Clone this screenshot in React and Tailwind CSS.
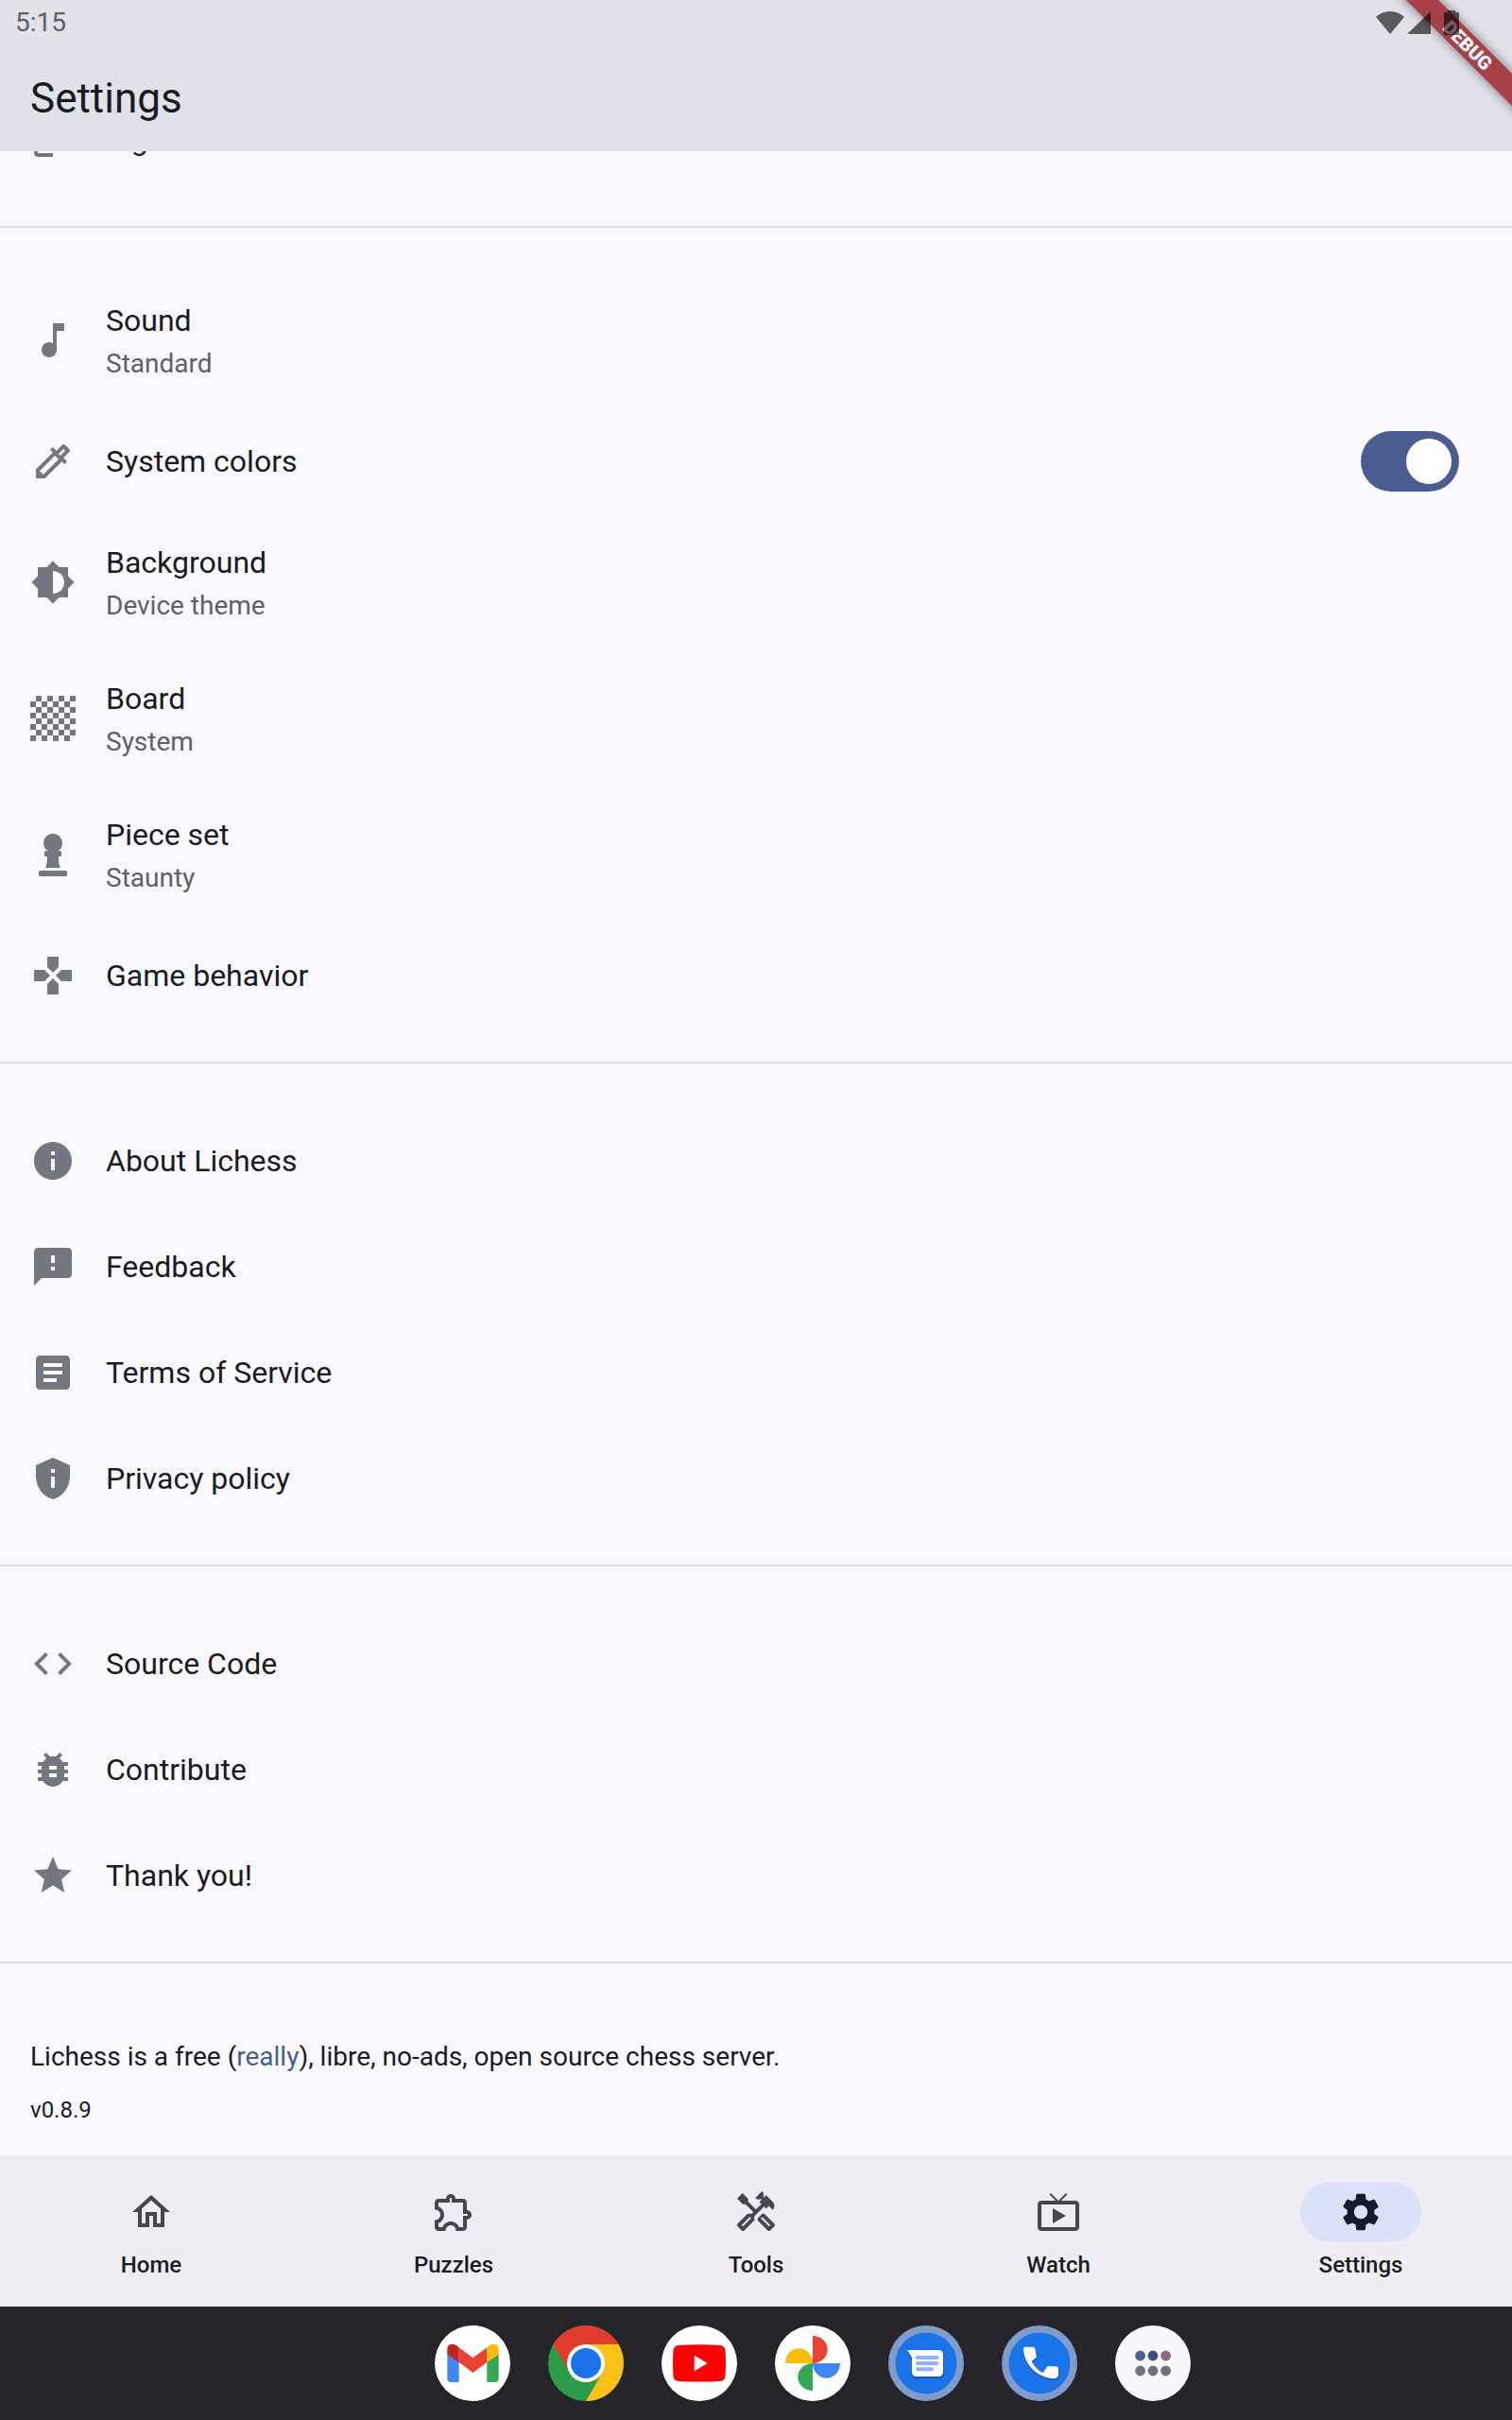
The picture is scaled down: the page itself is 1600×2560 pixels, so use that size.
import {
  MdArticle,
  MdBrightness6,
  MdBugReport,
  MdCode,
  MdFeedback,
  MdGamepad,
  MdInfo,
  MdLogout,
  MdMusicNote,
  MdOutlineColorize,
  MdOutlineExtension,
  MdOutlineHandyman,
  MdOutlineHome,
  MdOutlineLiveTv,
  MdPrivacyTip,
  MdSettings,
  MdStar,
} from "react-icons/md";

function BoardIcon({ className }) {
  const cells = [];
  for (let row = 0; row < 8; row++) {
    for (let col = 0; col < 8; col++) {
      if ((row + col) % 2 === 1) cells.push([col, row]);
    }
  }
  return (
    <svg viewBox="0 0 8 8" className={className} fill="currentColor" shapeRendering="crispEdges" aria-hidden="true">
      {cells.map(([x, y]) => (
        <rect key={`${x}-${y}`} x={x} y={y} width="1" height="1" />
      ))}
    </svg>
  );
}

function PawnIcon({ className }) {
  return (
    <svg viewBox="0 0 48 48" className={className} fill="currentColor" aria-hidden="true">
      <circle cx="24" cy="11.8" r="10" />
      <rect x="15" y="20" width="18" height="6" rx="1.5" />
      <path d="M18 25h12c0 5 .3 9 1.8 13H16.2C17.7 34 18 30 18 25z" />
      <rect x="9" y="41" width="30" height="6" rx="1.5" />
    </svg>
  );
}

function Row({ icon: Icon, title, subtitle }) {
  return (
    <li>
      <button
        type="button"
        className={`flex w-full items-center gap-8 px-8 text-left ${subtitle ? "h-36" : "h-28"}`}
      >
        <Icon className="size-12 shrink-0 text-[#757780]" />
        <span className="flex flex-col gap-0.5">
          <span className="text-[32px] leading-[48px]">{title}</span>
          {subtitle && <span className="text-[28px] leading-10 text-[#5f6066]">{subtitle}</span>}
        </span>
      </button>
    </li>
  );
}

function SwitchRow({ icon: Icon, title }) {
  return (
    <li>
      <label className="flex h-28 items-center gap-8 pr-14 pl-8">
        <Icon className="size-12 shrink-0 text-[#757780]" />
        <span className="flex-1 text-[32px] leading-[48px]">{title}</span>
        <span className="grid h-16 w-26 items-center rounded-full bg-[#495d92] p-2">
          <input
            type="checkbox"
            role="switch"
            defaultChecked
            className="size-12 appearance-none justify-self-start rounded-full bg-white checked:justify-self-end"
          />
        </span>
      </label>
    </li>
  );
}

function Group({ children, first }) {
  return (
    <ul className={`border-b-2 border-[#dfdfe6] pb-[35px] ${first ? "-mt-[68px]" : "pt-[47px]"}`}>{children}</ul>
  );
}

const destinations = [
  { label: "Home", icon: MdOutlineHome },
  { label: "Puzzles", icon: MdOutlineExtension },
  { label: "Tools", icon: MdOutlineHandyman },
  { label: "Watch", icon: MdOutlineLiveTv },
  { label: "Settings", icon: MdSettings, active: true },
];

function DebugBanner() {
  return (
    <div className="pointer-events-none absolute top-0 right-0 size-40 overflow-hidden">
      <div className="absolute top-9 -left-[7px] flex h-6 w-60 rotate-45 items-center justify-center bg-[#a74147] text-[20px] leading-6 font-black text-white shadow-[0_0_12px_rgba(0,0,0,0.5)]">
        DEBUG
      </div>
    </div>
  );
}

function StatusIcons() {
  return (
    <svg viewBox="0 0 90 28" className="relative h-7 w-[90px]" fill="#000" fillOpacity="0.6" aria-hidden="true">
      <path d="M0 8C8 0 22 0 30 8L15 26z" />
      <path d="M58 2v24H33z" />
      <path d="M76 1h8v2h3q1 0 1 1v22q0 1-1 1H73q-1 0-1-1V4q0-1 1-1h3z" />
    </svg>
  );
}

function GmailLogo() {
  return (
    <svg viewBox="0 0 80 80" className="size-20">
      <circle cx="40" cy="40" r="40" fill="#fff" />
      <path d="M13.3 30v26q0 4 4 4h8.4V37z" fill="#4285f4" />
      <path d="M67.7 30v26q0 4-4 4h-8.4V37z" fill="#34a853" />
      <path d="M25.7 23.3l14.8 11 14.8-11V39L40.5 50 25.7 39z" fill="#ea4335" />
      <path d="M55.3 23.3c6-5.5 12.4-4.3 12.4 2.5v5L55.3 39z" fill="#fbbc04" />
      <path d="M25.7 23.3c-6-5.5-12.4-4.3-12.4 2.5v5L25.7 39z" fill="#c5221f" />
    </svg>
  );
}

function ChromeLogo() {
  return (
    <svg viewBox="0 0 80 80" className="size-20">
      <circle cx="40" cy="40" r="40" fill="#2b9c49" />
      <path d="M40 20h34.6A40 40 0 0 1 40 80l17.3-30z" fill="#fbc116" />
      <path d="M5.4 20A40 40 0 0 1 74.6 20H40L22.7 50z" fill="#e33b2e" />
      <circle cx="40" cy="40" r="20" fill="#fff" />
      <circle cx="40" cy="40" r="16" fill="#1a73e8" />
    </svg>
  );
}

function YouTubeLogo() {
  return (
    <svg viewBox="0 0 80 80" className="size-20">
      <circle cx="40" cy="40" r="40" fill="#fff" />
      <path
        d="M18 21q22-1.500 44 0 5 .5 5.500 5.500 1 13.500 0 27-.5 5-5.500 5.500-22 1-44 0-5-.5-5.500-5.500-1-13.500 0-27 .5-5 5.500-5.500z"
        fill="#f00"
      />
      <path d="M34.7 31.7v16.6l14-8.3z" fill="#fff" />
    </svg>
  );
}

function PhotosLogo() {
  return (
    <svg viewBox="0 0 80 80" className="size-20">
      <circle cx="40" cy="40" r="40" fill="#fff" />
      <path d="M40 11c9 0 15.7 6.5 15.7 14.5S49 40 40 40z" fill="#ea4335" />
      <path d="M69 40c0 9-6.5 15.7-14.5 15.7S40 49 40 40z" fill="#4285f4" />
      <path d="M40 69c-9 0-15.7-6.5-15.7-14.5S31 40 40 40z" fill="#34a853" />
      <path d="M11 40c0-9 6.5-15.7 14.5-15.7S40 31 40 40z" fill="#fbbc04" />
    </svg>
  );
}

function MessagesLogo() {
  return (
    <svg viewBox="0 0 80 80" className="size-20">
      <circle cx="40" cy="40" r="40" fill="#7f9cc9" />
      <circle cx="40" cy="40" r="32.5" fill="#1a73e8" />
      <path d="M20 28h34q5 0 5 5v18q0 5-5 5H30q-5 0-5-5V36z" fill="#1558b8" />
      <path d="M20 26h33q5 0 5 5v18q0 5-5 5H30q-5 0-5-5V34z" fill="#fff" />
      <path d="M31 34h20.5M31 40h20.5M31 46.3h15" stroke="#8ab4f8" strokeWidth="4" strokeLinecap="round" />
    </svg>
  );
}

function PhoneLogo() {
  return (
    <svg viewBox="0 0 80 80" className="size-20">
      <circle cx="40" cy="40" r="40" fill="#7f9cc9" />
      <circle cx="40" cy="40" r="32.5" fill="#1a73e8" />
      <path
        d="M25 25h9.5q1.500 0 1.700 1.500l1.200 7.500q.1 1.200-.8 2L32 40q4.500 8.500 12.500 12.500l4-6.500q1-1 2.200-1l8 .2q1.800.2 1.800 2V54q-.3 3.800-4.300 4C39 57.500 25.500 46 23.200 28.500q-.2-3.300 1.800-3.500z"
        fill="#1558b8"
      />
      <path
        d="M25 22.700h8.500q1.500 0 1.700 1.500l1.600 8.300q.1 1.200-.8 2L31.600 38q4.400 8.200 11.900 12.200l4.300-6.200q.9-1 2.100-1l8.500.5q1.600.2 1.600 2V52q-.3 4-4.300 4.200C39 55.500 25 44 23 26q-.2-3.200 2-3.300z"
        fill="#fff"
      />
    </svg>
  );
}

function AllAppsLogo() {
  return (
    <svg viewBox="0 0 80 80" className="size-20">
      <circle cx="40" cy="40" r="40" fill="#faf8fd" />
      <circle cx="26.6" cy="32" r="5.4" fill="#4a6096" />
      <circle cx="40" cy="32" r="5.4" fill="#3c4f85" />
      <circle cx="53.6" cy="32" r="5.4" fill="#8a6b85" />
      <circle cx="26.6" cy="48" r="5.4" fill="#6e7180" />
      <circle cx="40" cy="48" r="5.4" fill="#6e7180" />
      <circle cx="53.6" cy="48" r="5.4" fill="#6e7180" />
    </svg>
  );
}

const dock = [
  { name: "Gmail", logo: GmailLogo },
  { name: "Chrome", logo: ChromeLogo },
  { name: "YouTube", logo: YouTubeLogo },
  { name: "Photos", logo: PhotosLogo },
  { name: "Messages", logo: MessagesLogo },
  { name: "Phone", logo: PhoneLogo },
  { name: "All apps", logo: AllAppsLogo },
];

export default function App() {
  return (
    <div className="flex min-h-screen flex-col bg-[#f9f9ff] font-[Roboto,sans-serif] text-[#1a1b21]">
      <header className="relative z-10 bg-[#e1e1ea]">
        <DebugBanner />
        <div className="flex h-12 items-center justify-between pr-[54px] pl-4">
          <time className="text-[28px] leading-10 text-[#5f6066]">5:15</time>
          <StatusIcons />
        </div>
        <div className="flex h-28 items-center px-8">
          <h1 className="text-[44px] leading-[56px]">Settings</h1>
        </div>
      </header>

      <main className="flex-1 overflow-hidden">
        <Group first>
          <Row icon={MdLogout} title="Sign out" />
        </Group>
        <Group>
          <Row icon={MdMusicNote} title="Sound" subtitle="Standard" />
          <SwitchRow icon={MdOutlineColorize} title="System colors" />
          <Row icon={MdBrightness6} title="Background" subtitle="Device theme" />
          <Row icon={BoardIcon} title="Board" subtitle="System" />
          <Row icon={PawnIcon} title="Piece set" subtitle="Staunty" />
          <Row icon={MdGamepad} title="Game behavior" />
        </Group>
        <Group>
          <Row icon={MdInfo} title="About Lichess" />
          <Row icon={MdFeedback} title="Feedback" />
          <Row icon={MdArticle} title="Terms of Service" />
          <Row icon={MdPrivacyTip} title="Privacy policy" />
        </Group>
        <Group>
          <Row icon={MdCode} title="Source Code" />
          <Row icon={MdBugReport} title="Contribute" />
          <Row icon={MdStar} title="Thank you!" />
        </Group>
        <footer className="flex flex-col gap-5 px-8 pt-[79px] pb-8">
          <p className="text-[28px] leading-10">
            Lichess is a free (
            <a href="#really" className="text-[#495d92]">
              really
            </a>
            ), libre, no-ads, open source chess server.
          </p>
          <p className="text-[24px] leading-8">v0.8.9</p>
        </footer>
      </main>

      <nav className="grid grid-cols-5 bg-[#eeedf3] py-7">
        {destinations.map(({ label, icon: Icon, active }) => (
          <button
            key={label}
            type="button"
            aria-current={active ? "page" : undefined}
            className="flex flex-col items-center gap-2"
          >
            <span
              className={`flex h-16 w-32 items-center justify-center rounded-full ${
                active ? "bg-[#dbe1f9] text-[#141b2c]" : "text-[#45464f]"
              }`}
            >
              <Icon className="size-12" />
            </span>
            <span className="text-[24px] leading-8 font-medium">{label}</span>
          </button>
        ))}
      </nav>

      <div className="flex h-30 items-start justify-center gap-10 bg-[#252529] pt-5 pl-30">
        {dock.map(({ name, logo: Logo }) => (
          <button key={name} type="button" aria-label={name}>
            <Logo />
          </button>
        ))}
      </div>
    </div>
  );
}
